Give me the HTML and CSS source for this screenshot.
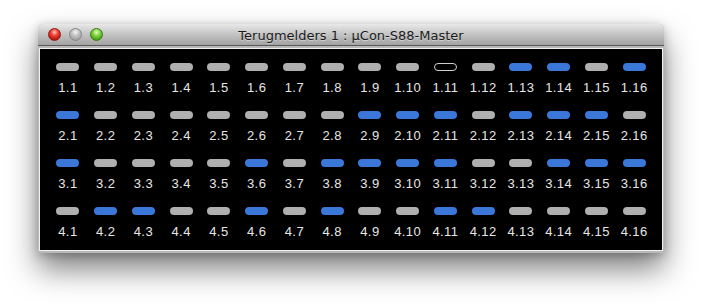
FILE: index.html
```html
<!DOCTYPE html>
<html>
<head>
<meta charset="utf-8">
<title>Terugmelders 1</title>
<link rel="stylesheet" href="styles.css">
</head>
<body>
<div class="window">
  <div class="titlebar">
    <div class="lights">
      <span class="light red"></span>
      <span class="light gray"></span>
      <span class="light green"></span>
    </div>
    <div class="title">Terugmelders 1 : µCon-S88-Master</div>
    <div></div>
  </div>
  <div class="content">
    <div class="grid">
      <div class="cell"><span class="led off"></span><span class="lbl">1.1</span></div>
      <div class="cell"><span class="led off"></span><span class="lbl">1.2</span></div>
      <div class="cell"><span class="led off"></span><span class="lbl">1.3</span></div>
      <div class="cell"><span class="led off"></span><span class="lbl">1.4</span></div>
      <div class="cell"><span class="led off"></span><span class="lbl">1.5</span></div>
      <div class="cell"><span class="led off"></span><span class="lbl">1.6</span></div>
      <div class="cell"><span class="led off"></span><span class="lbl">1.7</span></div>
      <div class="cell"><span class="led off"></span><span class="lbl">1.8</span></div>
      <div class="cell"><span class="led off"></span><span class="lbl">1.9</span></div>
      <div class="cell"><span class="led off"></span><span class="lbl">1.10</span></div>
      <div class="cell"><span class="led sel"></span><span class="lbl">1.11</span></div>
      <div class="cell"><span class="led off"></span><span class="lbl">1.12</span></div>
      <div class="cell"><span class="led on"></span><span class="lbl">1.13</span></div>
      <div class="cell"><span class="led on"></span><span class="lbl">1.14</span></div>
      <div class="cell"><span class="led off"></span><span class="lbl">1.15</span></div>
      <div class="cell"><span class="led on"></span><span class="lbl">1.16</span></div>

      <div class="cell"><span class="led on"></span><span class="lbl">2.1</span></div>
      <div class="cell"><span class="led off"></span><span class="lbl">2.2</span></div>
      <div class="cell"><span class="led off"></span><span class="lbl">2.3</span></div>
      <div class="cell"><span class="led off"></span><span class="lbl">2.4</span></div>
      <div class="cell"><span class="led off"></span><span class="lbl">2.5</span></div>
      <div class="cell"><span class="led off"></span><span class="lbl">2.6</span></div>
      <div class="cell"><span class="led off"></span><span class="lbl">2.7</span></div>
      <div class="cell"><span class="led off"></span><span class="lbl">2.8</span></div>
      <div class="cell"><span class="led on"></span><span class="lbl">2.9</span></div>
      <div class="cell"><span class="led on"></span><span class="lbl">2.10</span></div>
      <div class="cell"><span class="led on"></span><span class="lbl">2.11</span></div>
      <div class="cell"><span class="led off"></span><span class="lbl">2.12</span></div>
      <div class="cell"><span class="led on"></span><span class="lbl">2.13</span></div>
      <div class="cell"><span class="led on"></span><span class="lbl">2.14</span></div>
      <div class="cell"><span class="led on"></span><span class="lbl">2.15</span></div>
      <div class="cell"><span class="led off"></span><span class="lbl">2.16</span></div>

      <div class="cell"><span class="led on"></span><span class="lbl">3.1</span></div>
      <div class="cell"><span class="led off"></span><span class="lbl">3.2</span></div>
      <div class="cell"><span class="led off"></span><span class="lbl">3.3</span></div>
      <div class="cell"><span class="led off"></span><span class="lbl">3.4</span></div>
      <div class="cell"><span class="led off"></span><span class="lbl">3.5</span></div>
      <div class="cell"><span class="led on"></span><span class="lbl">3.6</span></div>
      <div class="cell"><span class="led off"></span><span class="lbl">3.7</span></div>
      <div class="cell"><span class="led on"></span><span class="lbl">3.8</span></div>
      <div class="cell"><span class="led on"></span><span class="lbl">3.9</span></div>
      <div class="cell"><span class="led on"></span><span class="lbl">3.10</span></div>
      <div class="cell"><span class="led on"></span><span class="lbl">3.11</span></div>
      <div class="cell"><span class="led off"></span><span class="lbl">3.12</span></div>
      <div class="cell"><span class="led off"></span><span class="lbl">3.13</span></div>
      <div class="cell"><span class="led on"></span><span class="lbl">3.14</span></div>
      <div class="cell"><span class="led on"></span><span class="lbl">3.15</span></div>
      <div class="cell"><span class="led on"></span><span class="lbl">3.16</span></div>

      <div class="cell"><span class="led off"></span><span class="lbl">4.1</span></div>
      <div class="cell"><span class="led on"></span><span class="lbl">4.2</span></div>
      <div class="cell"><span class="led on"></span><span class="lbl">4.3</span></div>
      <div class="cell"><span class="led off"></span><span class="lbl">4.4</span></div>
      <div class="cell"><span class="led off"></span><span class="lbl">4.5</span></div>
      <div class="cell"><span class="led on"></span><span class="lbl">4.6</span></div>
      <div class="cell"><span class="led off"></span><span class="lbl">4.7</span></div>
      <div class="cell"><span class="led on"></span><span class="lbl">4.8</span></div>
      <div class="cell"><span class="led off"></span><span class="lbl">4.9</span></div>
      <div class="cell"><span class="led off"></span><span class="lbl">4.10</span></div>
      <div class="cell"><span class="led on"></span><span class="lbl">4.11</span></div>
      <div class="cell"><span class="led on"></span><span class="lbl">4.12</span></div>
      <div class="cell"><span class="led off"></span><span class="lbl">4.13</span></div>
      <div class="cell"><span class="led off"></span><span class="lbl">4.14</span></div>
      <div class="cell"><span class="led off"></span><span class="lbl">4.15</span></div>
      <div class="cell"><span class="led off"></span><span class="lbl">4.16</span></div>
    </div>
  </div>
</div>
</body>
</html>
```
FILE: styles.css
```css
html, body {
  margin: 0;
  padding: 0;
  background: #ffffff;
}
body {
  padding: 24px 0 0 38px;
  width: 704px;
  height: 308px;
  box-sizing: border-box;
  overflow: hidden;
}
.window {
  width: 626px;
  box-sizing: border-box;
  background: #b9b9b9;
  border-radius: 5px 5px 0 0;
  padding: 0 1px 2px 1px;
  box-shadow: 0 16px 30px rgba(0,0,0,0.5), 0 2px 10px rgba(0,0,0,0.22);
}
.titlebar {
  height: 21px;
  margin: 0 -1px;
  display: grid;
  grid-template-columns: 1fr auto 1fr;
  align-items: center;
  background: linear-gradient(#e9e9e9, #c6c6c6 45%, #a3a3a3);
  border-radius: 5px 5px 0 0;
  border-bottom: 1px solid #585858;
}
.lights {
  display: flex;
  gap: 8px;
  padding-left: 10px;
}
.light {
  width: 13px;
  height: 13px;
  border-radius: 50%;
  box-sizing: border-box;
}
.red {
  background: radial-gradient(circle at 50% 30%, #ffc6c2 0, #f0443b 35%, #b40d07 80%);
  border: 1px solid #8c1c16;
}
.gray {
  background: radial-gradient(circle at 50% 30%, #f4f4f4 0, #c2c2c2 40%, #9a9a9a 85%);
  border: 1px solid #868686;
}
.green {
  background: radial-gradient(circle at 50% 30%, #e4ffc8 0, #7ed43c 38%, #3c9410 85%);
  border: 1px solid #3a7a16;
}
.title {
  font-family: "DejaVu Sans", "Liberation Sans", sans-serif;
  font-size: 13px;
  color: #1a1a1a;
  padding-top: 1px;
  text-shadow: 0 1px 0 rgba(255,255,255,0.4);
}
.content {
  margin-top: 2px;
  border: 1px solid #f2f2f2;
  background: #000000;
  padding: 14px 9px 11px 9px;
}
.grid {
  display: grid;
  grid-template-columns: repeat(16, 1fr);
  row-gap: 16.5px;
}
.cell {
  display: flex;
  flex-direction: column;
  align-items: center;
}
.led {
  width: 23px;
  height: 8px;
  border-radius: 4px;
  box-sizing: border-box;
}
.led.off {
  background: #afafaf;
}
.led.on {
  background: #3a77d9;
}
.led.sel {
  background: #000000;
  border: 1.5px solid #cfcfcf;
}
.lbl {
  margin-top: 8.5px;
  font-family: "Liberation Sans", Arial, sans-serif;
  font-size: 13px;
  line-height: 15px;
  color: #e6e6e6;
  letter-spacing: 0.4px;
}
```
